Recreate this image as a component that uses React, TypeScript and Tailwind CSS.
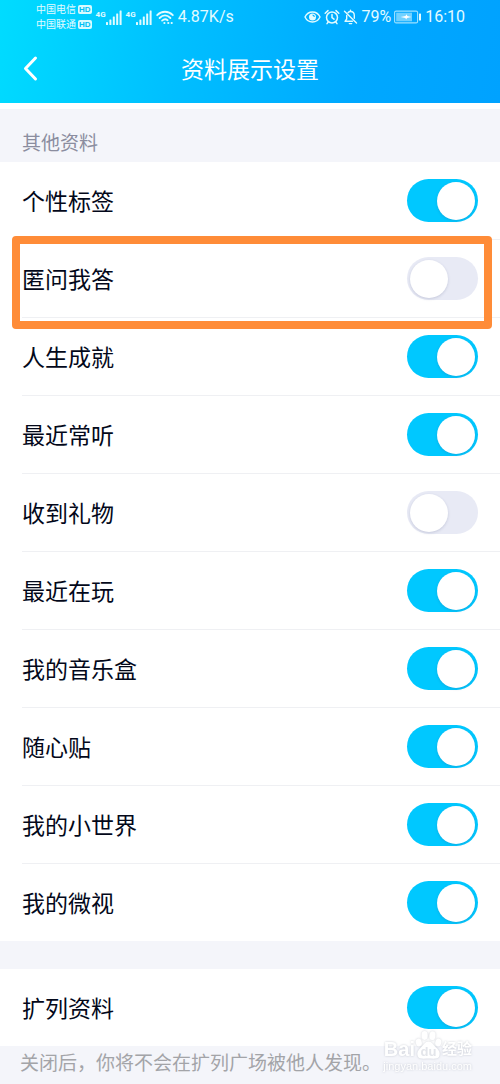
import React, { useState } from 'react';

interface Setting {
  id: string;
  label: string;
  on: boolean;
  marked?: boolean;
}

const profileSettings: Setting[] = [
  { id: 'tags', label: '个性标签', on: true },
  { id: 'qa', label: '匿问我答', on: false, marked: true },
  { id: 'achievements', label: '人生成就', on: true },
  { id: 'listening', label: '最近常听', on: true },
  { id: 'gifts', label: '收到礼物', on: false },
  { id: 'playing', label: '最近在玩', on: true },
  { id: 'music', label: '我的音乐盒', on: true },
  { id: 'stickers', label: '随心贴', on: true },
  { id: 'world', label: '我的小世界', on: true },
  { id: 'weishi', label: '我的微视', on: true },
];

const Signal = () => (
  <div className="flex">
    <span className="text-[8px] font-bold leading-[10px]">4G</span>
    <svg width="16" height="15" viewBox="0 0 16 15" fill="currentColor" aria-hidden="true">
      <rect x="0" y="12" width="2" height="3" rx="0.5" />
      <rect x="3.4" y="9.5" width="2" height="5.5" rx="0.5" />
      <rect x="6.8" y="6.5" width="2" height="8.5" rx="0.5" />
      <rect x="10.2" y="3.5" width="2" height="11.5" rx="0.5" />
      <rect x="13.6" y="0.5" width="2" height="14.5" rx="0.5" />
    </svg>
  </div>
);

const Carrier = ({ name }: { name: string }) => (
  <div className="flex items-center gap-0.5 text-[10px] leading-[15px]">
    <span>{name}</span>
    <span className="h-[9px] rounded-[2px] bg-[#d8fbff] px-px font-['Liberation_Sans',sans-serif] text-[8px] font-bold leading-[9px] text-[#00bff5]">HD</span>
  </div>
);

const StatusBar = () => (
  <div className="flex h-[34px] items-center justify-between pl-9 pr-[35px] text-[#e2fbff]">
    <div className="flex items-center">
      <div className="pr-1">
        <Carrier name="中国电信" />
        <Carrier name="中国联通" />
      </div>
      <div className="flex gap-1">
        <Signal />
        <Signal />
      </div>
      <svg className="ml-1" width="18" height="15" viewBox="0 0 18 15" fill="none" stroke="currentColor" strokeWidth="1.8" strokeLinecap="round" aria-hidden="true">
        <path d="M1.2 5.2C5.6 0.6 12.4 0.6 16.8 5.2" />
        <path d="M3.6 8C7 4.7 11 4.7 14.4 8" />
        <path d="M6.1 10.6C8 9 10 9 11.6 10.2" />
        <circle cx="8.4" cy="13" r="1.1" fill="currentColor" stroke="none" />
        <path d="M12.2 13h.2M15.6 13h.2" strokeWidth="2" />
      </svg>
      <span className="ml-1 text-base leading-6">4.87K/s</span>
    </div>
    <div className="flex items-center gap-[3px]">
      <svg width="17" height="16" viewBox="0 0 17 16" fill="none" stroke="currentColor" strokeWidth="1.4" aria-hidden="true">
        <path d="M1 8C4.2 1.3 12.8 1.3 16 8C12.8 14.7 4.2 14.7 1 8Z" />
        <circle cx="8.5" cy="8" r="3.5" fill="currentColor" stroke="none" />
        <path d="M8.6 6.1a2 2 0 0 1 1.8 1.8" stroke="#00b2ff" strokeWidth="1.1" />
      </svg>
      <svg width="16" height="16" viewBox="0 0 16 16" fill="none" stroke="currentColor" strokeWidth="1.5" strokeLinecap="round" aria-hidden="true">
        <circle cx="8" cy="8.5" r="5.5" />
        <path d="M8 5.6v3.1l2 1.5M1.2 4.2L4 1.6M14.8 4.2L12 1.6M4.2 13l-1.2 1.6M11.8 13l1.2 1.6" />
      </svg>
      <svg width="15" height="16" viewBox="0 0 15 16" fill="none" stroke="currentColor" strokeWidth="1.4" strokeLinecap="round" strokeLinejoin="round" aria-hidden="true">
        <path d="M1.5 2.3L13.5 14" />
        <path d="M5 3.7C5.7 2.9 6.6 2.5 7.5 2.5C9.8 2.5 11.3 4.3 11.3 6.5V9.3" />
        <path d="M3.7 6.5V10L2 12.3H9.5M7.5 1.2V2.3M6.3 14.6H8.7" />
      </svg>
      <span className="text-base leading-6">79%</span>
      <svg width="28" height="14" viewBox="0 0 28 14" aria-hidden="true">
        <rect x="0.6" y="1.1" width="23" height="11.8" rx="1.5" fill="none" stroke="currentColor" strokeWidth="1.1" opacity="0.7" />
        <rect x="2.2" y="2.7" width="15.8" height="8.6" fill="currentColor" opacity="0.5" />
        <path d="M6.5 7L11.5 6L12.5 4.2L13.3 6L17.5 7L13 8L12.2 9.6L11.3 8Z" fill="#fff" />
        <rect x="25" y="3.5" width="2" height="7" rx="0.6" fill="currentColor" />
      </svg>
      <span className="text-base leading-6">16:10</span>
    </div>
  </div>
);

const SettingRow = ({ setting }: { setting: Setting }) => {
  const [on, setOn] = useState(setting.on);

  return (
    <li className="group relative pl-[22px]">
      <div className="flex items-center justify-between border-b border-[#eff0f3] pr-[22px] group-last:border-b-0">
        <label htmlFor={setting.id} className="grow pb-5 pt-6 text-[23px] leading-[33px] text-[#03081a]">
          {setting.label}
        </label>
        <input
          id={setting.id}
          type="checkbox"
          role="switch"
          checked={on}
          onChange={() => setOn(!on)}
          className="flex h-[43px] w-[71px] shrink-0 appearance-none items-center rounded-full bg-[#e8eaf5] px-[3px] before:block before:size-[38px] before:rounded-full before:bg-white before:shadow-[0_1px_3px_rgba(60,70,120,0.2)] before:content-[''] checked:justify-end checked:bg-[#00c8ff]"
        />
      </div>
      {setting.marked && (
        <div className="pointer-events-none absolute -bottom-[11px] -top-1 left-3 right-2 z-10 rounded-[4px] border-8 border-[#ff8c38]" />
      )}
    </li>
  );
};

const Watermark = () => (
  <div className="pointer-events-none absolute bottom-3 right-7 z-10 font-['Liberation_Sans','Noto_Sans_CJK_SC',sans-serif] text-white drop-shadow-[0_0_1px_rgba(90,100,120,0.3)]">
    <div className="flex items-end justify-end">
      <span className="text-[20px] font-bold leading-[22px]">Bai</span>
      <svg width="27" height="30" viewBox="0 0 27 30" aria-hidden="true">
        <g fill="#fff">
          <ellipse cx="3.8" cy="12.5" rx="3" ry="4" transform="rotate(-15 3.8 12.5)" />
          <ellipse cx="9.6" cy="5.5" rx="3.1" ry="4.4" />
          <ellipse cx="17.4" cy="5.7" rx="3.1" ry="4.4" transform="rotate(8 17.4 5.7)" />
          <ellipse cx="23.3" cy="12.5" rx="3" ry="4" transform="rotate(15 23.3 12.5)" />
          <path d="M13.5 11.5C17 11.5 18.3 15 21 17.5C24.5 20.5 25.3 23 24.3 26C23 29.5 18.5 28.6 13.5 28.6C8.5 28.6 4 29.5 2.7 26C1.7 23 2.5 20.5 6 17.5C8.700 15 10 11.5 13.5 11.5Z" />
        </g>
        <text x="13.5" y="26" textAnchor="middle" fontSize="13" fontWeight="bold" fill="#e3e5ea">du</text>
      </svg>
      <span className="text-[15px] font-bold leading-[22px]">经验</span>
    </div>
    <div className="text-right text-[11px] leading-3">jingyan.baidu.com</div>
  </div>
);

export default function App() {
  return (
    <div className="relative min-h-screen overflow-hidden bg-[#f4f5fa] font-[Roboto,'Noto_Sans_CJK_SC',sans-serif]">
      <header className="bg-[linear-gradient(100deg,#00dcff_0%,#00bfff_36%,#00a8ff_72%,#00a2ff_100%)] text-white">
        <StatusBar />
        <div className="grid h-[69px] grid-cols-[64px_1fr_64px] items-center">
          <button type="button" aria-label="返回" className="flex h-full items-center pl-[22px]">
            <svg width="18" height="28" viewBox="0 0 18 28" fill="none" stroke="currentColor" strokeWidth="3" strokeLinecap="round" strokeLinejoin="round">
              <path d="M13.5 3L3.5 13.5L13.5 24" />
            </svg>
          </button>
          <h1 className="pt-1 text-center text-[23px] leading-[33px]">资料展示设置</h1>
        </div>
      </header>

      <main>
        <h2 className="border-t-[6px] border-white px-[22px] pb-1 pt-[21px] text-[19px] leading-7 text-[#8b8d9f]">其他资料</h2>
        <ul className="bg-white">
          {profileSettings.map((setting) => (
            <SettingRow key={setting.id} setting={setting} />
          ))}
        </ul>

        <ul className="mt-7 bg-white">
          <SettingRow setting={{ id: 'expand', label: '扩列资料', on: true }} />
        </ul>
        <p className="whitespace-nowrap px-5 pb-1.5 pt-1 text-[19px] leading-7 text-[#a3a4a8]">
          关闭后，你将不会在扩列广场被他人发现。
        </p>
      </main>
      <Watermark />
    </div>
  );
}
